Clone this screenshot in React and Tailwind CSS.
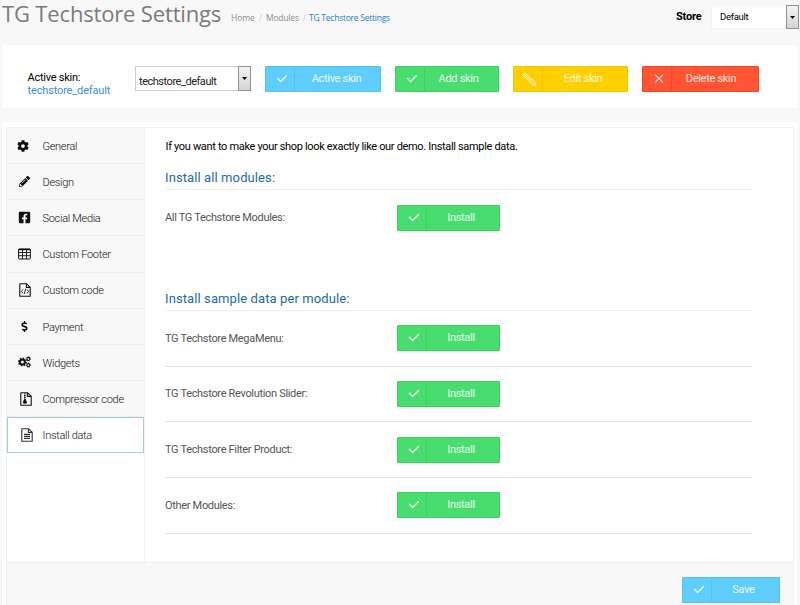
import React from "react";
import { FaCog, FaPencilAlt, FaFacebookSquare, FaDollarSign } from "react-icons/fa";

const Check = () => (
  <svg width="12" height="10" viewBox="0 0 12 10" fill="none" stroke="currentColor" strokeWidth="1.4">
    <path d="M1.2 4.1 4.6 7.5 10.8 1.3" />
  </svg>
);
const Cross = () => (
  <svg width="10" height="10" viewBox="0 0 10 10" fill="none" stroke="currentColor" strokeWidth="1.2">
    <path d="M1 .6 9 8.6M9 .6 1 8.6" />
  </svg>
);
const Pencil = () => (
  <svg width="15" height="15" viewBox="0 0 15 15" fill="none" stroke="currentColor" strokeWidth="1">
    <path d="M1 3.2 3.2 1 12.4 9.6 14 14 9.8 12.2ZM2.2 2.1 11.2 11" />
    <path d="M12 13.2 13.2 12.2 14 14Z" fill="currentColor" />
  </svg>
);
const Table = () => (
  <svg width="13" height="12" viewBox="0 0 13 12" fill="none" stroke="currentColor" strokeWidth="1">
    <rect x="0.6" y="1" width="11.8" height="10" rx="1" />
    <path d="M.6 1.5H12.4" strokeWidth="1.4" />
    <path d="M.6 4.5H12.4M.6 7.7H12.4M4.5 1V11M8.5 1V11" strokeWidth="0.9" />
  </svg>
);
const File = ({ children }) => (
  <svg width="12" height="14" viewBox="0 0 12 14" fill="none" stroke="currentColor" strokeWidth="1.1">
    <path d="M1.2.8H7.6L11.2 4.2V13.2H.8V1.2ZM7.4.8V4.4H11.2" />
    {children}
  </svg>
);
const CodeFile = () => (
  <File><path d="M4 6.4 2.4 8.4 4 10.4M8 6.4 9.6 8.4 8 10.4M6.6 5.8 5.4 11" strokeWidth="0.9" /></File>
);
const ZipFile = () => (
  <File>
    <path d="M4.8 1.4V7" strokeWidth="1.6" strokeDasharray="1.1 .6" />
    <path d="M4.2 7H5.6L7 10.4Q6.8 11.8 4.9 11.8T2.8 10.4Z" fill="currentColor" stroke="none" />
  </File>
);
const TextFile = () => (
  <File><path d="M3 6.4H9M3 8.4H9M3 10.4H9" /></File>
);
const Cogs = () => (
  <svg width="13" height="12" viewBox="0 0 13 12" fill="none" stroke="currentColor">
    <circle cx="4.4" cy="6" r="2.5" strokeWidth="2" />
    <circle cx="4.4" cy="6" r="3.9" strokeWidth="1.2" strokeDasharray="1.5 1.56" />
    <circle cx="10.4" cy="2.9" r="1.5" strokeWidth="1.1" />
    <circle cx="10.4" cy="2.9" r="2.2" strokeWidth="0.7" strokeDasharray=".9 .83" />
    <circle cx="10.4" cy="9.1" r="1.5" strokeWidth="1.1" />
    <circle cx="10.4" cy="9.1" r="2.2" strokeWidth="0.7" strokeDasharray=".9 .83" />
  </svg>
);

const tones = {
  blue: "bg-[#5fceff] border-[#50c2f5]",
  green: "bg-[#48dd6e] border-[#3ad160]",
  yellow: "bg-[#ffd000] border-[#f1c300]",
  red: "bg-[#ff5534] border-[#f04826]",
};

function Button({ tone, icon, children, className, label = "" }) {
  return (
    <button className={`flex h-[26px] shrink-0 rounded-[1px] border text-[11px] leading-[23px] tracking-[-0.3px] text-white/85 ${tones[tone]} ${className}`}>
      <span className={`flex h-full w-[29px] shrink-0 items-center justify-center border-r pl-[3px] ${tones[tone]}`}>{icon}</span>
      <span className={`flex-1 whitespace-nowrap text-center ${label}`}>{children}</span>
    </button>
  );
}

function Arrow({ className }) {
  return (
    <span className={`flex shrink-0 items-center justify-center border border-[#929292] bg-linear-to-b from-[#f4f4f4] to-[#d4d4d4] ${className}`}>
      <svg width="5" height="3" viewBox="0 0 5 3"><path d="M0 0H5L2.5 3Z" /></svg>
    </span>
  );
}

const items = [
  ["General", <FaCog size={12} />, "pl-[10px]"],
  ["Design", <FaPencilAlt size={11} />, "pl-[12px]"],
  ["Social Media", <FaFacebookSquare size={13} />, "pl-[11px]"],
  ["Custom Footer", <Table />, "pl-[11px]"],
  ["Custom code", <CodeFile />, "pl-[12px]"],
  ["Payment", <FaDollarSign size={11} />, "pl-[12px]"],
  ["Widgets", <Cogs />, "pl-[11px]"],
  ["Compressor code", <ZipFile />, "pl-[13px]"],
];

function Module({ name, bordered = true }) {
  return (
    <div className={`flex items-center ${bordered ? "h-[55.7px] border-b border-[#e3e3e3]" : "h-[55px]"}`}>
      <span className="w-[232px] whitespace-nowrap pt-px text-[11px] tracking-[-0.32px] text-[#555]">{name}</span>
      <Button tone="green" icon={<Check />} className="w-[103px]" label="pr-1">Install</Button>
    </div>
  );
}

export default function App() {
  return (
    <div className="h-[605px] w-[800px] overflow-hidden bg-[#f8f8f8] font-[Roboto,'Liberation_Sans',sans-serif] text-[11px] text-black">
      <header className="flex h-[45px] items-start font-['Open_Sans',sans-serif]">
        <h1 className="w-[229px] shrink-0 whitespace-nowrap pl-0.5 text-[22px] leading-[26px] tracking-[-0.16px] text-[#7b7b7b]">TG Techstore Settings</h1>
        <nav className="flex pl-0.5 pt-2.5 text-[8.5px] leading-[15px] tracking-[-0.24px] whitespace-nowrap text-[#8e8e8e]">
          <span className="w-[28px] tracking-[-0.1px]">Home</span>
          <span className="w-[7px] text-[#ccc]">/</span>
          <span className="w-[37px] tracking-[-0.2px]">Modules</span>
          <span className="w-[6px] text-[#ccc]">/</span>
          <span className="text-[#2481c4]">TG Techstore Settings</span>
        </nav>
        <div className="ml-auto flex pr-px pt-[5px]">
          <span className="w-[35px] pt-[4px] font-[Roboto] text-[11px] leading-4 font-bold tracking-[-0.2px]">Store</span>
          <div className="flex h-[24px] w-[88px] border border-[#f2f2f2] bg-white font-[Roboto]">
            <span className="flex-1 pl-2 text-[9.5px] leading-[22px] tracking-[-0.3px]">Default</span>
            <Arrow className="-mr-px -my-px w-[13px]" />
          </div>
        </div>
      </header>

      <section className="mx-[2px] flex h-[63px] w-[795px] items-start bg-white pl-[25px] pt-[21px]">
        <div className="w-[108px] pt-[5px] pl-[0.5px] leading-[13px]">
          <div className="tracking-[-0.25px]">Active skin:</div>
          <div className="tracking-[-0.15px] text-[#3a8ee6]">techstore_default</div>
        </div>
        <div className="flex h-[25px] w-[116px] border border-[#cfcfcf] bg-white">
          <span className="flex-1 pl-[3px] pt-[4px] text-[11px] leading-[22px] tracking-[-0.47px] text-[#222]">techstore_default</span>
          <Arrow className="-mr-px -my-px w-[13px]" />
        </div>
        <Button tone="blue" icon={<Check />} className="ml-[14px] w-[116px]" label="pr-0.5">Active skin</Button>
        <Button tone="green" icon={<Check />} className="ml-[14px] w-[104px]" label="pr-1.5">Add skin</Button>
        <Button tone="yellow" icon={<Pencil />} className="ml-[14px] w-[115px]" label="pr-1">Edit skin</Button>
        <Button tone="red" icon={<Cross />} className="ml-[14px] w-[117px]" label="pr-2">Delete skin</Button>
      </section>

      <section className="mx-[2px] mt-[14px] h-[483px] w-[795px] bg-white pl-1 pt-[5px]">
        <div className="flex h-[478px] w-[788px] flex-col border-x border-t border-[#f0f0f0]">
          <div className="flex h-[434px] shrink-0">
            <aside className="w-[138px] shrink-0 border-r border-[#f0f0f0] text-[11px] font-light tracking-[-0.3px] text-[#111]">
              {items.map(([name, icon, pad]) => (
                <div key={name} className="flex h-[36.15px] items-center border-b border-[#ededed] bg-[#f8f8f8]">
                  <span className={`w-[35.5px] text-[#111] ${pad}`}>{icon}</span>
                  <span className="whitespace-nowrap pt-[3px]">{name}</span>
                </div>
              ))}
              <div className="flex h-[36px] w-[137px] items-center border border-[#a9cadb] bg-white">
                <span className="w-[34.5px] pl-[13px] text-[#333]"><TextFile /></span>
                <span className="whitespace-nowrap pt-[3px]">Install data</span>
              </div>
            </aside>
            <main className="ml-[20px] w-[587px]">
              <p className="pt-3 pl-[0.5px] leading-[14px] tracking-[-0.33px]">If you want to make your shop look exactly like our demo. Install sample data.</p>
              <h2 className="mt-[14px] h-[22px] border-b border-[#eee] text-[13px] leading-5 tracking-[0.1px] text-[#1b6ca8]">Install all modules:</h2>
              <Module name="All TG Techstore Modules:" bordered={false} />
              <h2 className="mt-[44px] h-[22px] border-b border-[#eee] text-[13px] leading-5 tracking-[0.1px] text-[#1b6ca8]">Install sample data per module:</h2>
              <Module name="TG Techstore MegaMenu:" />
              <Module name="TG Techstore Revolution Slider:" />
              <Module name="TG Techstore Filter Product:" />
              <Module name="Other Modules:" />
            </main>
          </div>
          <footer className="flex flex-1 justify-end border-t border-[#efefef] bg-[#f8f8f8] pr-[13px] pt-[14px]">
            <Button tone="blue" icon={<Check />} className="w-[98px]" label="pr-1">Save</Button>
          </footer>
        </div>
      </section>
    </div>
  );
}
